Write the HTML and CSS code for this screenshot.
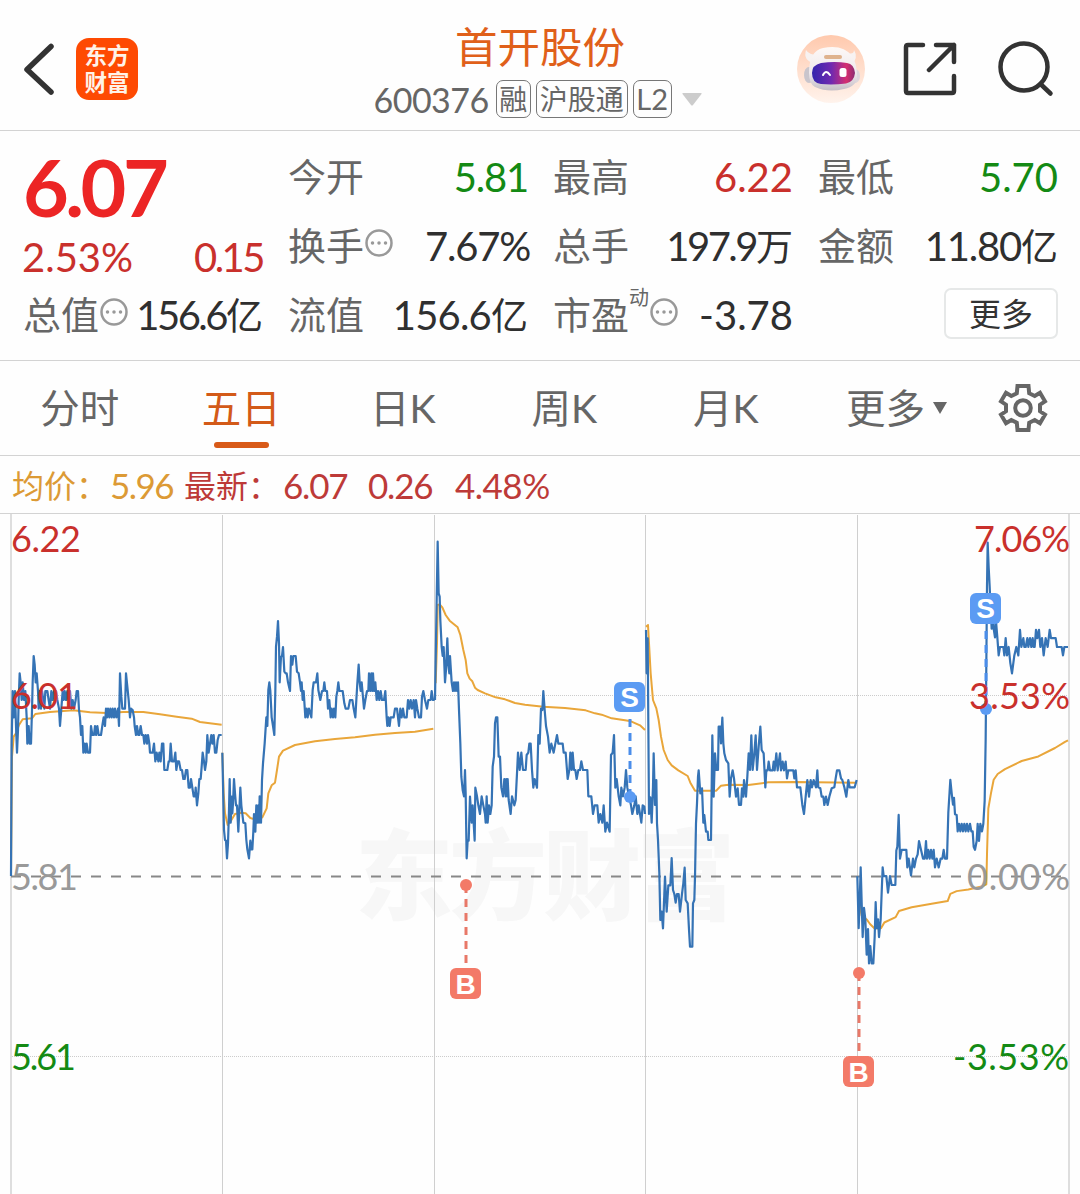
FILE: index.html
```html
<!DOCTYPE html>
<html lang="zh-CN">
<head>
    <meta charset="UTF-8">
    <meta name="viewport" content="width=device-width, initial-scale=1.0">
    <title>首开股份 600376</title>
    <link rel="stylesheet" href="styles.css">
</head>
<body>
    <header class="header">
        <div class="header-left">
            <svg class="back" width="34" height="54" viewBox="0 0 34 54"><path d="M29 4.500L5 27.500L29 50"/></svg>
            <div class="logo"><span>东方</span><span>财富</span></div>
        </div>
        <div class="header-title">
            <h1>首开股份</h1>
            <div class="code-row">
                <span class="code">600376</span>
                <span class="tag tag-rong">融</span>
                <span class="tag">沪股通</span>
                <span class="tag tag-l2">L2</span>
                <svg class="code-arrow" width="20" height="13" viewBox="0 0 20 13"><path d="M1 0H19Q20 0 19.500 1L11 12Q10 13 9 12L.5 1Q0 0 1 0Z"/></svg>
            </div>
        </div>
        <div class="header-right">
            <svg width="68" height="68" viewBox="0 0 68 68">
                <defs>
                    <linearGradient id="avatarBg" x1="0" y1="0" x2="0" y2="1">
                        <stop offset="0" stop-color="#ffc9ad"/>
                        <stop offset="1" stop-color="#fff3ec"/>
                    </linearGradient>
                    <linearGradient id="visor" x1="0" y1="0" x2="1" y2="0">
                        <stop offset="0" stop-color="#3426ad"/>
                        <stop offset=".45" stop-color="#7029b0"/>
                        <stop offset=".8" stop-color="#d52f70"/>
                        <stop offset="1" stop-color="#8b2c72"/>
                    </linearGradient>
                    <linearGradient id="head" x1="0" y1="0" x2="0" y2="1">
                        <stop offset="0" stop-color="#fdf8f6"/>
                        <stop offset=".6" stop-color="#efe9ec"/>
                        <stop offset="1" stop-color="#c4bec6"/>
                    </linearGradient>
                </defs>
                <circle cx="34" cy="34" r="34" fill="url(#avatarBg)"/>
                <path d="M16 28Q6 25 9 15Q12 20 21 20ZM50 18Q57 20 57 15Q62 23 54 30Z" fill="#f7f2f1"/>
                <ellipse cx="12" cy="40" rx="5" ry="8" fill="#c9c5cc"/>
                <ellipse cx="58" cy="41" rx="5" ry="7" fill="#ddd7dc"/>
                <path d="M12 38Q12 16 26 13Q46 9 55 21Q60 28 60 42Q60 51 47 54Q31 58 18 52Q12 49 12 38Z" fill="url(#head)"/>
                <rect x="27" y="20" width="18" height="4" rx="2" fill="#dfb28d"/>
                <path d="M24 28Q38 26 50 28Q57 29 58 38Q57 47 49 48.500Q36 50 24 49Q15 48 15 38Q15 30 24 28Z" fill="url(#visor)"/>
                <path d="M26 40Q29 34 33 40" fill="none" stroke="#fff" stroke-width="2" stroke-linecap="round"/>
                <rect x="42.500" y="33" width="7" height="9" rx="2.500" fill="#fff"/>
            </svg>
            <svg class="line-icon share" width="54" height="54" viewBox="0 0 54 54"><path d="M20 3H5Q3 3 3 5V49Q3 51 5 51H49Q51 51 51 49V34M33 3H51V20M51 3L26 28"/></svg>
            <svg class="line-icon" width="56" height="56" viewBox="0 0 56 56"><circle cx="26" cy="26" r="23.500"/><path d="M42.500 43L52.500 52.500"/></svg>
        </div>
    </header>

    <section class="quote">
        <div class="price-cell">
            <div class="price">6.07</div>
            <div class="change"><span>2.53%</span><span class="tight">0.15</span></div>
        </div>
        <div class="cell"><label>今开</label><b class="green snug">5.81</b></div>
        <div class="cell"><label>最高</label><b class="red">6.22</b></div>
        <div class="cell"><label>最低</label><b class="green">5.70</b></div>
        <div class="cell"><label>换手</label><svg class="dots" width="28" height="28" viewBox="0 0 28 28"><circle cx="14" cy="14" r="12.500"/><path d="M7.500 14h.01M14 14h.01M20.500 14h.01"/></svg><b class="snug pct">7.67%</b></div>
        <div class="cell"><label>总手</label><b class="tight">197.9<i>万</i></b></div>
        <div class="cell"><label>金额</label><b class="snug">11.80<i>亿</i></b></div>
        <div class="cell"><label>总值</label><svg class="dots" width="28" height="28" viewBox="0 0 28 28"><circle cx="14" cy="14" r="12.500"/><path d="M7.500 14h.01M14 14h.01M20.500 14h.01"/></svg><b class="tight">156.6<i>亿</i></b></div>
        <div class="cell"><label>流值</label><b class="loose">156.6<i>亿</i></b></div>
        <div class="cell"><label>市盈</label><sup>动</sup><svg class="dots" width="28" height="28" viewBox="0 0 28 28"><circle cx="14" cy="14" r="12.500"/><path d="M7.500 14h.01M14 14h.01M20.500 14h.01"/></svg><b>-3.78</b></div>
        <div class="cell"><button class="more">更多</button></div>
    </section>

    <nav class="tabs">
        <a class="tab">分时</a>
        <a class="tab active">五日</a>
        <a class="tab">日K</a>
        <a class="tab">周K</a>
        <a class="tab">月K</a>
        <a class="tab tab-more">更多<svg width="14" height="12" viewBox="0 0 14 12"><path d="M0 0H14L7 12Z"/></svg></a>
        <a class="tab-gear"><svg width="50" height="50" viewBox="-25 -25 50 50"><path d="M-5.500 -22H5.500L6.200 -14.700L11.700 -12L17 -15.300L22 -6.700L17 -3.300V3.300L22 6.700L17 15.300L11.700 12L6.200 14.700L5.500 22H-5.500L-6.200 14.700L-11.700 12L-17 15.300L-22 6.700L-17 3.300V-3.300L-22 -6.700L-17 -15.300L-11.700 -12L-6.200 -14.700Z"/><circle r="7.800"/></svg></a>
    </nav>

    <div class="legend">
        <span class="avg">均价：</span><span class="avg avg-val">5.96</span>
        <span class="last">最新：</span><span class="last v1">6.07</span><span class="last v2">0.26</span><span class="last v3">4.48%</span>
    </div>

    <svg class="chart" width="1080" height="680" viewBox="0 514 1080 680">
        <text class="watermark" x="355" y="912" textLength="380">东方财富</text>

        <!-- grid -->
        <path class="grid-edge" d="M11 514V1194M1069 514V1194"/>
        <path class="grid-day" d="M222.500 515V1194M434.500 515V1194M645.500 515V1194M857.500 515V1194"/>
        <path class="grid-dot" d="M12 695.500H1068M12 1056.500H1068"/>
        <path class="grid-zero" d="M11 876.500H1068"/>

        <!-- day 1 -->
        <g transform="translate(0 510) scale(.33333)">
            <polyline class="avg-line" points="33,1098 36,740 41,680 48,670 57,645 68,628 96,625 106,612 150,606 220,601 270,607 320,609 370,606 430,606 480,613 530,620 575,626 600,636 665,644"/>
            <polyline class="price-line" points="33,1098 35,700 38,543 42,622 45,543 48,648 51,728 54,660 56,570 59,490 62,517 65,570 68,517 72,570 76,543 80,622 82,701 86,648 89,701 93,701 96,600 98,517 101,438 104,464 107,517 110,490 114,543 116,596 119,543 123,596 126,543 130,570 133,596 136,543 142,543 146,570 150,596 154,543 158,570 162,543 168,543 172,570 177,596 180,648 184,596 188,543 191,570 194,543 198,570 202,543 206,570 210,543 214,596 218,570 222,596 227,570 230,543 234,543 237,600 240,622 243,675 247,648 250,728 254,701 257,728 260,701 264,728 270,728 273,648 277,675 282,675 285,648 288,675 292,648 296,675 303,675 308,640 311,622 315,648 318,596 321,622 324,596 328,622 331,596 335,622 338,596 342,622 345,596 349,622 354,596 357,648 360,490 364,560 367,596 375,596 378,490 382,530 386,570 390,622 393,596 398,600 402,622 404,648 408,675 411,648 415,675 418,675 422,648 426,675 430,675 433,701 437,675 441,701 444,675 448,701 450,728 458,728 462,701 466,754 470,728 475,754 478,728 482,754 486,701 490,701 493,780 502,780 506,754 509,754 512,701 516,754 522,754 526,728 529,780 533,754 537,754 542,780 546,780 550,807 554,807 558,780 562,780 566,833 570,833 573,807 577,833 581,859 585,859 587,833 591,886 595,850 598,807 602,807 605,770 608,728 612,754 615,780 619,754 622,675 626,728 630,701 634,675 637,701 641,675 645,728 649,728 653,690 657,675 665,675"/>
        </g>
        <!-- day 2 -->
        <g transform="translate(215 510) scale(.33333)">
            <polyline class="avg-line" points="22,728 26,850 30,910 38,945 46,935 60,912 78,908 92,910 106,924 125,930 142,922 155,895 160,850 170,826 180,818 186,780 192,740 204,722 240,705 300,694 360,687 420,682 480,674 540,669 600,665 655,656"/>
            <polyline class="price-line" points="22,728 25,870 27,960 30,990 33,992 36,1045 39,1000 42,900 44,807 47,938 50,860 52,910 54,880 57,807 60,850 63,886 66,886 70,965 73,900 76,833 79,886 82,912 85,938 91,940 94,990 97,1018 102,1045 106,992 109,1018 112,1018 115,965 117,912 121,965 124,886 127,938 130,886 132,938 134,859 138,938 141,810 144,760 149,700 154,622 157,648 160,540 163,517 166,543 170,622 174,648 178,675 181,543 183,410 186,380 189,333 192,400 194,517 198,440 201,438 204,411 208,485 212,490 215,490 219,517 225,543 228,438 232,464 235,438 242,438 246,485 251,490 255,517 258,543 260,517 263,570 266,543 271,622 275,596 278,622 282,596 289,622 293,540 296,517 303,517 307,490 310,540 316,570 321,543 325,543 328,517 331,543 336,543 339,596 343,570 347,622 350,596 354,622 357,596 361,622 364,560 367,543 370,517 373,543 383,543 388,580 392,596 400,596 405,570 412,570 416,596 421,622 424,570 427,520 431,464 434,517 437,543 440,517 447,596 451,570 456,543 460,543 462,490 466,543 469,490 472,543 474,490 477,543 481,517 485,570 489,543 493,570 497,543 501,570 507,570 511,543 515,622 517,648 520,622 524,648 527,622 536,622 540,596 546,596 552,648 556,596 560,622 564,596 568,622 575,622 579,570 583,596 587,570 591,596 596,570 600,622 603,570 607,596 612,622 618,622 621,560 625,543 630,570 636,596 640,570 647,570 650,543 654,570 659,570"/>
        </g>
        <!-- day 3 -->
        <g transform="translate(425 510) scale(.33333)">
            <polyline class="avg-line" points="32,520 36,400 38,285 44,283 52,292 62,315 74,332 98,352 106,375 115,420 122,450 127,490 134,506 142,514 150,533 158,540 180,550 212,562 240,568 270,579 300,584 355,590 420,594 482,601 510,610 530,614 560,625 600,631 618,634 645,646 660,660"/>
            <polyline class="price-line" points="30,570 34,330 38,95 41,250 44,260 46,330 50,411 53,438 56,411 60,517 63,480 67,385 70,464 73,490 75,438 80,517 84,543 87,517 90,543 93,517 96,543 99,517 102,600 106,700 109,800 113,840 117,859 120,780 122,850 125,1045 128,990 131,992 135,860 140,938 143,886 149,992 151,833 156,859 160,886 165,912 170,859 175,886 180,912 182,938 185,859 188,938 192,886 196,912 200,886 203,770 207,740 210,640 213,622 217,622 221,740 225,740 229,833 234,859 238,807 242,859 244,807 246,859 248,807 251,870 257,912 261,859 268,886 272,870 276,790 279,728 284,780 289,728 294,780 302,780 305,735 310,728 313,701 317,701 321,780 325,833 329,807 336,833 340,675 344,701 348,596 352,600 355,543 359,600 363,648 369,680 374,728 379,701 386,728 391,701 396,675 400,701 413,701 416,728 422,728 428,807 433,780 436,728 440,780 443,728 447,780 451,780 455,807 460,780 465,780 469,754 474,780 487,780 490,859 499,859 504,912 509,886 517,886 521,938 526,912 532,938 536,886 541,965 546,938 554,965 558,735 563,728 567,675 571,833 575,807 581,859 586,886 589,833 594,859 599,833 603,780 607,833 612,859 618,886 622,912 628,886 632,859 637,912 641,886 645,912 649,938 653,886 658,890 660,912"/>
        </g>
        <!-- day 4 -->
        <g transform="translate(635 590) scale(.33333)">
            <polyline class="avg-line" points="33,110 39,105 42,160 47,250 54,330 64,355 71,390 78,440 86,480 98,510 110,526 130,541 158,558 166,578 180,602 244,602 258,587 280,584 340,585 400,577 480,576 665,578"/>
            <polyline class="price-line" points="33,120 35,250 38,145 40,400 42,672 46,622 50,698 54,590 56,490 60,645 64,570 66,700 69,750 73,850 76,990 80,965 84,1015 90,860 95,965 100,886 106,886 110,804 114,900 118,912 122,938 126,912 131,912 135,965 141,912 145,880 149,833 152,930 158,940 162,1018 165,1070 172,1070 174,940 178,930 180,860 183,700 186,640 189,560 191,541 196,610 201,595 205,698 208,675 213,725 218,725 220,750 228,750 232,436 236,620 240,490 244,540 249,540 251,410 256,410 258,460 262,383 265,460 268,490 273,510 280,520 284,620 288,565 293,541 297,565 303,620 308,595 312,645 318,645 321,595 325,620 327,570 333,620 337,560 341,490 345,540 349,436 353,540 358,490 362,436 366,540 371,470 376,410 380,480 386,490 391,592 394,541 398,541 401,515 405,541 413,541 416,515 419,541 424,490 428,541 435,490 438,541 443,515 447,541 452,515 456,565 460,541 475,541 478,565 482,541 486,592 496,592 502,645 507,672 513,610 517,570 522,620 527,570 531,592 536,570 543,592 547,541 550,592 556,595 560,620 565,620 568,645 573,620 578,645 583,620 590,595 598,592 602,565 606,541 613,541 618,565 622,570 628,592 634,620 640,570 644,592 659,592 665,570"/>
        </g>
        <!-- day 5 -->
        <g transform="translate(845 510) scale(.33333 .38265)">
            <polyline class="avg-line" points="40,1010 50,1060 65,1070 75,1082 88,1093 108,1093 118,1078 152,1064 162,1048 200,1038 260,1029 308,1022 316,1003 335,996 370,992 410,984 424,978 426,900 430,780 438,740 446,705 458,690 480,677 530,656 580,644 630,622 660,606 669,602"/>
            <polyline class="price-line" points="37,957 41,1093 44,1025 47,934 50,1025 53,1116 57,1040 61,1070 65,1162 69,1095 72,1185 76,1140 80,1185 85,1185 89,1116 92,1025 95,1093 99,1070 102,1116 107,1070 110,1000 113,934 116,957 124,957 129,1000 135,957 140,980 151,980 154,890 157,880 161,797 165,911 170,888 184,888 187,934 191,911 198,955 204,911 208,934 213,911 218,900 222,865 228,888 234,911 239,911 243,865 246,911 250,888 254,911 258,888 262,911 266,888 270,934 275,911 281,934 287,911 292,911 296,888 300,911 306,911 310,790 316,705 320,740 324,770 327,752 330,795 335,797 338,840 342,820 346,840 350,820 354,840 358,820 362,840 366,820 370,840 375,820 379,840 383,840 386,880 390,888 395,865 398,820 402,865 406,820 411,840 415,820 419,760 422,600 424,400 426,200 428,85 431,150 434,200 437,260 440,310 443,270 446,310 450,333 453,290 457,333 461,380 465,358 475,358 478,380 482,335 486,380 491,358 496,400 501,427 508,380 514,358 520,380 525,313 529,358 535,335 538,358 542,358 547,335 550,358 555,335 559,358 563,335 566,358 569,358 573,313 577,335 582,313 586,358 591,335 596,380 602,335 608,358 614,313 618,335 632,335 636,358 650,358 654,380 658,358 669,358"/>
        </g>

        <!-- trade marks -->
        <g class="sell">
            <path d="M630 719V797"/><circle cx="630" cy="797" r="6"/>
            <rect x="614" y="682" width="31" height="30" rx="6"/><text x="629.500" y="707">S</text>
            <path d="M986 631V709"/><circle cx="986" cy="709" r="6"/>
            <rect x="970" y="593" width="31" height="31" rx="6"/><text x="985.500" y="618">S</text>
        </g>
        <g class="buy">
            <path d="M466 885V963"/><circle cx="466" cy="885" r="6"/>
            <rect x="450" y="968" width="31" height="31" rx="6"/><text x="465.500" y="994">B</text>
            <path d="M859 973V1051"/><circle cx="859" cy="973" r="6"/>
            <rect x="843" y="1056" width="31" height="31" rx="6"/><text x="858.500" y="1082">B</text>
        </g>

        <g class="axis">
            <text class="red" x="11" y="552" textLength="70">6.22</text>
            <text class="red" x="11" y="709" textLength="67">6.01</text>
            <text class="gray" x="11" y="890" textLength="67">5.81</text>
            <text class="green" x="11" y="1070" textLength="65">5.61</text>
            <text class="red" x="974" y="552" textLength="96">7.06%</text>
            <text class="red" x="969" y="709" textLength="101">3.53%</text>
            <text class="gray" x="967" y="890" textLength="103">0.00%</text>
            <text class="green" x="953" y="1070" textLength="116">-3.53%</text>
        </g>
    </svg>
</body>
</html>
```
FILE: styles.css
```css
* { box-sizing: border-box; }
body { margin: 0; width: 1080px; height: 1194px; overflow: hidden; background: #fefefe; color: #2f2f2f; font-family: Lato, "Noto Sans CJK SC", sans-serif; }

.header { display: grid; grid-template-columns: 340px 400px 340px; height: 131px; border-bottom: 1px solid #d3d3d3; }
.header-left { display: flex; align-items: center; gap: 20px; padding: 7px 0 0 22px; }
.back path { fill: none; stroke: #333; stroke-width: 5.500; stroke-linecap: round; stroke-linejoin: round; }
.logo { display: flex; flex-direction: column; justify-content: center; align-items: center; width: 62px; height: 62px; border-radius: 13px; background: #fe4a02; color: #fff3e8; font-size: 22.500px; font-weight: 700; line-height: 27px; }
.header-title { display: flex; flex-direction: column; align-items: center; padding-top: 18px; }
.header-title h1 { margin: 0; font-size: 42.500px; font-weight: 400; line-height: 58px; color: #e0601a; }
.code-row { display: flex; align-items: center; gap: 5px; height: 46px; margin-left: -5px; color: #666; }
.code { margin-right: 2px; font-size: 34px; letter-spacing: -.5px; }
.tag { height: 38px; padding: 0 3px; border: 1.500px solid #777; border-radius: 7px; font-size: 28px; line-height: 36px; }
.tag-rong, .tag-l2 { padding: 0 2.500px; }
.tag-l2 { font-size: 29px; }
.code-arrow { margin-left: 5px; fill: #ccc; }
.header-right { display: flex; align-items: center; justify-content: flex-end; padding: 8px 26px 0 0; }
.share { margin: 0 41px 0 38px; }
.line-icon { fill: none; stroke: #333; stroke-width: 4.500; stroke-linecap: round; stroke-linejoin: round; }

.quote { display: grid; grid-template-columns: repeat(4, 240px); grid-auto-rows: 69px; column-gap: 25px; height: 230px; padding: 11px 0 0 23px; border-bottom: 1px solid #d3d3d3; }
.price-cell { grid-row: span 2; }
.price { height: 81px; font-size: 79px; font-weight: 700; line-height: 90px; letter-spacing: -3.500px; color: #ec2525; }
.change { display: flex; justify-content: space-between; margin-left: -1px; font-size: 40px; line-height: 68px; color: #c9302c; }
.cell { display: flex; align-items: center; line-height: 69px; white-space: nowrap; }
.cell label { font-size: 38px; color: #666; }
.cell b { margin: 1px 0 0 auto; font-size: 40px; font-weight: 400; }
.cell b i { font-size: 37px; font-style: normal; letter-spacing: 0; }
.cell .snug { letter-spacing: -1.200px; }
.cell .loose { letter-spacing: -.800px; }
.cell .pct { margin-right: -2px; }
.tight { letter-spacing: -2.500px; }
.cell sup { align-self: flex-start; margin-top: 3px; font-size: 20px; line-height: 28px; color: #666; }
.dots { flex: none; margin: -5px 0 0 1px; fill: none; stroke: #999; stroke-width: 2.500; }
.dots path { stroke-width: 3.500; stroke-linecap: round; }
.more { width: 114px; height: 51px; margin: -2px 0 0 auto; padding: 0; border: 2px solid #e6e8e8; border-radius: 7px; background: #fff; color: #333; font-family: inherit; font-size: 32px; line-height: 44px; }
.red { color: #c9302c; fill: #c9302c; }
.green { color: #148a14; fill: #148a14; }
.gray { fill: #999; }

.tabs { display: flex; height: 95px; border-bottom: 1px solid #d3d3d3; font-size: 39.500px; line-height: 94px; color: #666; }
.tab { width: 161.500px; padding-right: 2px; text-align: center; }
.tab.active { display: flex; flex-direction: column; align-items: center; height: 87px; line-height: 94px; color: #d35a18; }
.tab.active::after { content: ""; flex: none; width: 55px; height: 6px; margin-top: -13px; border-radius: 3px; background: #d85a18; }
.tab-more { display: flex; align-items: center; justify-content: center; gap: 8px; width: 180px; }
.tab-more svg { fill: #666; }
.tab-gear { display: flex; align-items: center; margin-left: auto; padding-right: 32px; }
.tab-gear svg { fill: none; stroke: #666; stroke-width: 4; }

.legend { display: flex; height: 58px; padding-left: 12px; border-bottom: 1px solid #d3d3d3; line-height: 59px; white-space: nowrap; }
.avg, .last { width: 99px; font-size: 32px; }
.avg { color: #dc9a35; }
.last { color: #bd3a38; }
.avg-val, .v1, .v2, .v3 { font-size: 35px; letter-spacing: -1.200px; }
.avg-val { width: 73px; margin-left: -1px; margin-right: 1px; letter-spacing: -1.500px; }
.v1 { width: 85px; }
.v2 { width: 87px; }
.v3 { letter-spacing: -.5px; }

.chart { display: block; }
.watermark { font-family: "Noto Sans CJK SC", sans-serif; font-size: 98px; font-weight: 900; fill: #f7f7f7; }
.grid-edge { stroke: #dedede; stroke-width: 2; }
.grid-day { stroke: #cfcfcf; stroke-width: 1; }
.grid-dot { stroke: #ccc; stroke-width: 1; stroke-dasharray: 1 1; }
.grid-zero { stroke: #888; stroke-width: 2; stroke-dasharray: 10 10; }
.avg-line, .price-line { fill: none; stroke-width: 2; stroke-linejoin: round; vector-effect: non-scaling-stroke; }
.avg-line { stroke: #e9a63a; }
.price-line { stroke: #3573b5; stroke-width: 2.200; }
.sell path, .buy path { stroke-width: 3; stroke-dasharray: 8 6; }
.sell path { stroke: #4a8dea; }
.sell circle, .sell rect { fill: #5b9bf3; }
.buy path { stroke: #e87868; }
.buy circle, .buy rect { fill: #f37a68; }
.sell text, .buy text { font-family: "Liberation Sans", sans-serif; font-size: 28px; font-weight: 700; text-anchor: middle; fill: #fff; }
.axis text { font-size: 36px; }
```
